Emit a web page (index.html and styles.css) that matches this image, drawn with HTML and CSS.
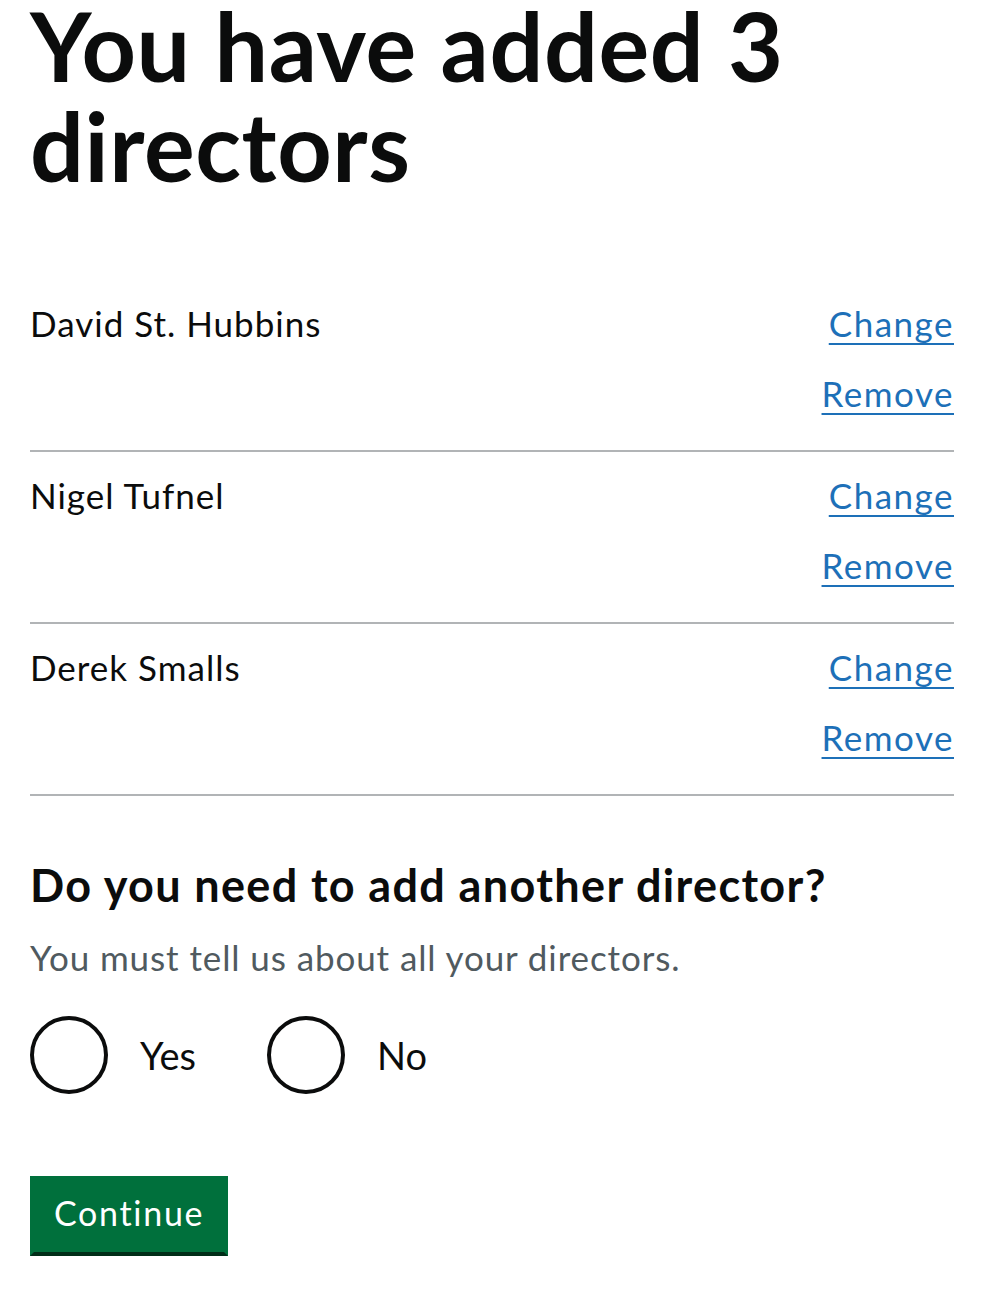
FILE: index.html
```html
<!DOCTYPE html>
<html lang="en">
<head>
<meta charset="utf-8">
<title>You have added 3 directors</title>
<link rel="stylesheet" href="styles.css">
</head>
<body>
<main class="page">
  <h1 class="title">You have added 3 directors</h1>

  <dl class="summary">
    <div class="summary-row">
      <dt class="summary-name">David St. Hubbins</dt>
      <dd class="summary-actions">
        <a class="link" href="#">Change</a>
        <a class="link" href="#">Remove</a>
      </dd>
    </div>
    <div class="summary-row">
      <dt class="summary-name">Nigel Tufnel</dt>
      <dd class="summary-actions">
        <a class="link" href="#">Change</a>
        <a class="link" href="#">Remove</a>
      </dd>
    </div>
    <div class="summary-row">
      <dt class="summary-name">Derek Smalls</dt>
      <dd class="summary-actions">
        <a class="link" href="#">Change</a>
        <a class="link" href="#">Remove</a>
      </dd>
    </div>
  </dl>

  <form class="form" action="#">
    <fieldset class="fieldset">
      <legend class="legend">Do you need to add another director?</legend>
      <p class="hint">You must tell us about all your directors.</p>
      <div class="radios">
        <label class="radio">
          <input class="radio-input" type="radio" name="another" value="yes">
          <span class="radio-label">Yes</span>
        </label>
        <label class="radio">
          <input class="radio-input" type="radio" name="another" value="no">
          <span class="radio-label">No</span>
        </label>
      </div>
    </fieldset>
    <button class="button" type="submit">Continue</button>
  </form>
</main>
</body>
</html>
```

FILE: styles.css
```css
html, body {
  margin: 0;
  padding: 0;
  background: #ffffff;
}

body {
  font-family: "Lato", "Liberation Sans", sans-serif;
  color: #0b0c0c;
}

.page {
  padding: 0 30px;
}

.title {
  margin: -5px 0 85px;
  font-size: 95px;
  line-height: 100px;
  font-weight: 700;
  letter-spacing: 0.6px;
}

.summary {
  margin: 0;
  padding: 0;
}

.summary-row {
  display: flex;
  justify-content: space-between;
  align-items: flex-start;
  padding: 18px 0 32px;
  border-bottom: 2px solid #b1b4b6;
}

.summary-name {
  margin: 0;
  font-size: 35px;
  line-height: 50px;
  letter-spacing: 1px;
}

.summary-actions {
  margin: 0;
  display: flex;
  flex-direction: column;
  align-items: flex-end;
  gap: 20px;
}

.link {
  font-size: 35px;
  line-height: 50px;
  letter-spacing: 1.5px;
  color: #1d70b8;
  text-decoration: underline;
  text-decoration-thickness: 2px;
  text-underline-offset: 6px;
}

.form {
  margin: 59px 0 0;
}

.fieldset {
  margin: 0;
  padding: 0;
  border: 0;
}

.legend {
  padding: 0;
  margin: 0;
  font-size: 45px;
  line-height: 60px;
  font-weight: 700;
  letter-spacing: 1.35px;
}

.hint {
  margin: 17px 0 34px;
  font-size: 35px;
  line-height: 50px;
  letter-spacing: 0.9px;
  color: #505a5f;
}

.radios {
  display: flex;
}

.radio {
  display: flex;
  align-items: center;
  margin-right: 40px;
}

.radio-input {
  appearance: none;
  -webkit-appearance: none;
  margin: 0;
  width: 78px;
  height: 78px;
  border: 4px solid #0b0c0c;
  border-radius: 50%;
  background: #ffffff;
  box-sizing: border-box;
}

.radio-label {
  padding: 0 31px 0 32px;
  font-size: 38px;
  line-height: 50px;
}

.button {
  display: block;
  margin: 82px 0 0;
  padding: 16px 20px 22px;
  border: 4px solid #00703c;
  border-bottom-color: #002d18;
  background: #00703c;
  color: #ffffff;
  font-family: "Lato", "Liberation Sans", sans-serif;
  font-size: 34px;
  line-height: 34px;
  letter-spacing: 1.7px;
  border-radius: 0;
  cursor: pointer;
}
```
